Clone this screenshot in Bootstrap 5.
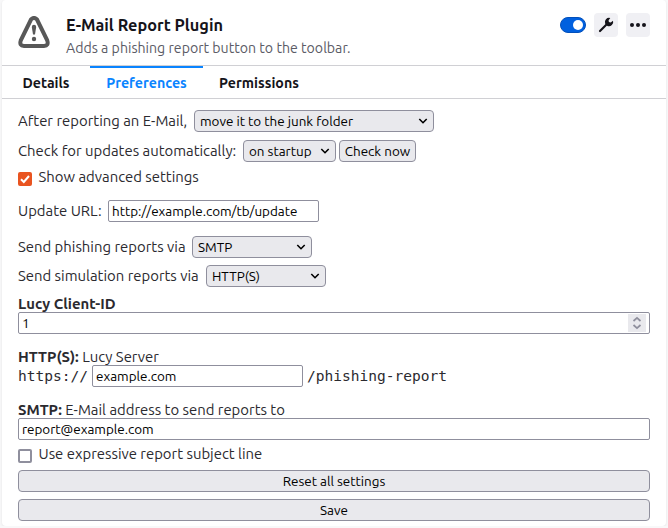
<!DOCTYPE html>
<html lang="en">
<head>
<meta charset="utf-8">
<meta name="viewport" content="width=device-width, initial-scale=1">
<title>E-Mail Report Plugin</title>
<link href="https://cdn.jsdelivr.net/npm/bootstrap@5.3.0/dist/css/bootstrap.min.css" rel="stylesheet">
<style>
body{font-family:Ubuntu,"Noto Sans",sans-serif;font-size:14.880px;line-height:20px;color:#2b2a2f;background:#f8f8f9;overflow:hidden}
.addon{width:664px;height:526px;margin:0 2px;border:0;border-radius:4px;box-shadow:0 1px 3px rgba(12,12,13,.08);color:inherit}
.addon-head{height:66px;border-bottom:1px solid #d0d0d4;padding:13px 16px 0}
.addon-title{font-size:16.300px;font-weight:700;line-height:24px;color:#15141a}
.addon-sub{font-size:14.150px;color:#5b5b66;line-height:22px}
.warn-icon{width:32px;height:32px;margin-top:3px}
.switch-pill{width:26px;height:16px;border-radius:8px;background:#0060df;border:1px solid #0250bb;padding:2px}
.switch-pill i{width:10px;height:10px;border-radius:50%;background:#fff}
.tool{width:24px;height:24px;border-radius:4px;background:#f0f0f4;border:0}
.addon-tabs{height:33px;border-bottom:1px solid #d0d0d4}
.addon-tabs .nav-link{padding:3px 0 0;font-size:14.200px;font-weight:700;color:#15141a;line-height:24px;border-top:2px solid transparent;border-radius:0;text-align:center}
.addon-tabs .nav-link.active{color:#0a84ff;border-top-color:#0a84ff}
.t1{width:88px}.t2{width:113px}.t3{width:112px}
.prefs{padding:11px 16px 0}
.line{height:22px;display:flex;align-items:center;white-space:nowrap}
.line>label{flex:none}
.form-control,.form-select,.push{height:22px;min-height:0;font-size:13.450px;line-height:20px;color:#000;border:1px solid #8f8f9d}
.form-control{border-radius:2px;padding:0 3px;background:#fff}
.form-select,.push{border-radius:4px;background-color:#e9e9ed;flex:none}
.form-select{padding:1px 20px 0 5px;line-height:19px;background-image:url("data:image/svg+xml,%3Csvg xmlns='http://www.w3.org/2000/svg' viewBox='0 0 10 8'%3E%3Cpath d='M1.3 2l3.7 3.7L8.7 2' fill='none' stroke='%23000' stroke-width='1.6'/%3E%3C/svg%3E");background-size:10px 8px;background-position:right 5px center}
.push{padding:1px 0 0;line-height:19px;text-align:center}
.form-check-input{width:14px;height:14px;margin:4px 6.500px 0 0;border:2px solid #8f8f9d;flex:none}
.form-check-input[type=checkbox]{border-radius:2px}
.form-check-input:checked{background-color:#e95420;border-color:#e95420}
.form-check-input:checked[type=checkbox]{background-size:14px;background-image:url("data:image/svg+xml,%3Csvg xmlns='http://www.w3.org/2000/svg' viewBox='0 0 14 14'%3E%3Cpath d='M3 7.300l2.800 2.700L11 4' fill='none' stroke='%23fff' stroke-width='2'/%3E%3C/svg%3E")}
.cap{height:18px;line-height:20px;white-space:nowrap}
.mono{font-family:"DejaVu Sans Mono",monospace;font-size:14.550px;flex:none}
.spinner-box{width:18px;height:18px;right:4px;top:2px;background:#e9e9ed}
</style>
</head>
<body>
<main class="card addon">
  <header class="addon-head d-flex">
    <svg class="warn-icon flex-shrink-0" viewBox="0 0 32 32"><path d="M13 3.500Q16 .500 19 3.500L29.200 24.300Q31 29.800 26 30H6Q1 29.800 2.800 24.300Z" fill="none" stroke="#585858" stroke-width="4"/><path d="M13.800 11a2.200 2.200 0 0 1 4.400 0L17 18.500h-2z" fill="#585858"/><circle cx="16" cy="23" r="2.200" fill="#585858"/></svg>
    <div class="ms-3"><div class="addon-title">E-Mail Report Plugin</div><div class="addon-sub">Adds a phishing report button to the toolbar.</div></div>
    <div class="ms-auto d-flex align-items-center gap-2 align-self-start">
      <span class="switch-pill d-flex justify-content-end"><i></i></span>
      <button class="tool p-0 d-flex align-items-center justify-content-center" aria-label="Options"><svg width="16" height="16" viewBox="0 0 16 16"><path d="M2 14L9 7" stroke="#15141a" stroke-width="2.200" stroke-linecap="round"/><path d="M12.300 1.100L10.600 3.300l.3 1.800 1.800.3 2.300-1.700A4.200 4.200 0 0 1 9.400 8.900L7.100 6.600A4.200 4.200 0 0 1 12.300 1.100z" fill="#15141a"/></svg></button>
      <button class="tool p-0 d-flex align-items-center justify-content-center" aria-label="More"><svg width="16" height="16" viewBox="0 0 16 16" fill="#15141a"><circle cx="2" cy="8" r="2"/><circle cx="8" cy="8" r="2"/><circle cx="14" cy="8" r="2"/></svg></button>
    </div>
  </header>
  <nav class="nav addon-tabs">
    <a class="nav-link t1">Details</a><a class="nav-link t2 active">Preferences</a><a class="nav-link t3">Permissions</a>
  </nav>
  <form class="prefs">
    <div class="line"><label style="width:176px">After reporting an E-Mail,</label><select class="form-select" style="width:240px"><option>move it to the junk folder</option></select></div>
    <div class="line" style="margin-top:8px"><label style="width:225px">Check for updates automatically:</label><select class="form-select" style="width:93px"><option>on startup</option></select><button type="button" class="push" style="width:77px;margin-left:3px">Check now</button></div>
    <div class="line" style="margin-top:4px"><input class="form-check-input" type="checkbox" id="adv" checked><label for="adv">Show advanced settings</label></div>
    <div class="line" style="margin-top:12px"><label style="width:90px">Update URL:</label><input class="form-control" style="width:211px" value="http://example.com/tb/update"></div>
    <div class="line" style="margin-top:14px"><label style="width:174px">Send phishing reports via</label><select class="form-select" style="width:120px"><option>SMTP</option></select></div>
    <div class="line" style="margin-top:7px"><label style="width:188px">Send simulation reports via</label><select class="form-select" style="width:120px"><option>HTTP(S)</option></select></div>
    <div class="cap" style="margin-top:7px"><b>Lucy Client-ID</b></div>
    <div class="position-relative"><input class="form-control" value="1"><span class="spinner-box position-absolute d-flex"><svg width="18" height="18" viewBox="0 0 18 18" fill="none" stroke="#8f8f9d" stroke-width="1.700"><path d="M5.500 7L9 3.800 12.500 7M5.500 11L9 14.200 12.500 11"/></svg></span></div>
    <div class="cap" style="margin-top:13px"><b>HTTP(S):</b> Lucy Server</div>
    <div class="line"><span class="mono" style="width:74px">https://</span><input class="form-control" style="width:211px" value="example.com"><span class="mono" style="margin-left:4px">/phishing-report</span></div>
    <div class="cap" style="margin-top:13px"><b>SMTP:</b> E-Mail address to send reports to</div>
    <input class="form-control" value="report@example.com">
    <div class="line" style="margin-top:3px"><input class="form-check-input" type="checkbox" id="subj"><label for="subj">Use expressive report subject line</label></div>
    <button type="button" class="push d-block w-100" style="margin-top:5px">Reset all settings</button>
    <button type="button" class="push d-block w-100" style="margin-top:7px">Save</button>
  </form>
</main>
<script src="https://cdn.jsdelivr.net/npm/bootstrap@5.3.0/dist/js/bootstrap.bundle.min.js"></script>
</body>
</html>
